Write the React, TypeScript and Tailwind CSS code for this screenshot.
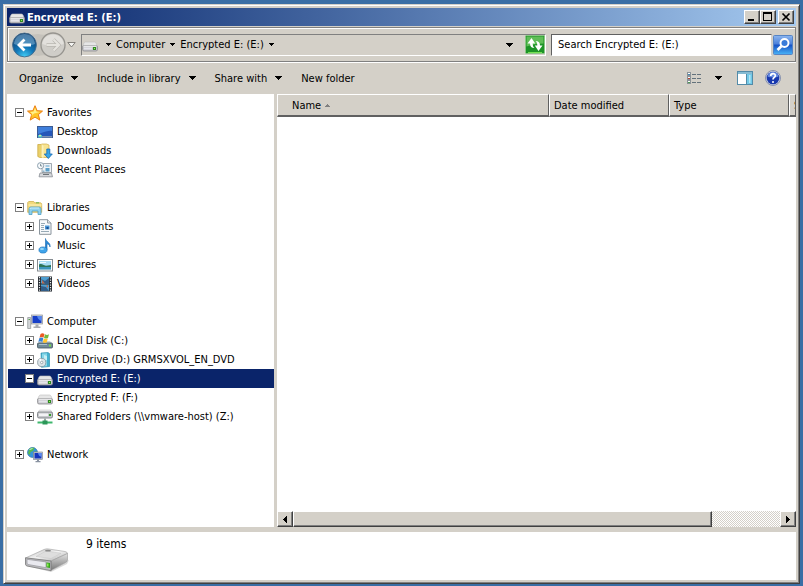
import type { ReactNode } from "react";

const RAISED =
  "border border-t-white border-l-white border-r-[#404040] border-b-[#404040] bg-[#d4d0c8] shadow-[inset_-1px_-1px_0_#808080]";

function Caret({ small = false }: { small?: boolean }) {
  return small ? (
    <svg width="5" height="3" viewBox="0 0 5 3" shapeRendering="crispEdges" aria-hidden="true">
      <path d="M0 0h5v1h-1v1h-1v1h-1v-1h-1v-1h-1z" fill="#000" />
    </svg>
  ) : (
    <svg width="7" height="4" viewBox="0 0 7 4" shapeRendering="crispEdges" aria-hidden="true">
      <path d="M0 0h7v1h-1v1h-1v1h-1v1h-1v-1h-1v-1h-1v-1h-1z" fill="#000" />
    </svg>
  );
}

function Icon({ children }: { children: ReactNode }) {
  return (
    <svg className="shrink-0" width="16" height="16" viewBox="0 0 16 16" aria-hidden="true">
      {children}
    </svg>
  );
}

function DriveIcon() {
  return (
    <Icon>
      <path d="M3.500 5h9q1 0 1.500 1l1.500 3.500H.5L2 6q.5-1 1.500-1z" fill="#e6e6e6" stroke="#bdbdbd" strokeWidth=".6" />
      <rect x=".5" y="8.500" width="15" height="5.500" rx="1.600" fill="#c6c6ca" stroke="#8e8e92" strokeWidth=".8" />
      <path d="M1.500 9.200h13" stroke="#fafafa" strokeWidth=".9" />
      <path d="M2 10.500h8v2H2z" fill="#e4e4ea" />
      <rect x="11" y="10" width="3" height="3" fill="#2f8a22" />
      <path d="M12 11h1v1h-1z" fill="#9aee62" />
    </Icon>
  );
}

function StarIcon() {
  return (
    <Icon>
      <path
        d="M8 .7l2.100 5 5.400.4-4.100 3.500 1.400 5.500L8 12.100l-4.800 3 1.400-5.500L.5 6.100l5.400-.4z"
        fill="#ffc526"
        stroke="#ec7d10"
        strokeWidth="1"
        strokeLinejoin="round"
      />
      <path d="M8 2.800l1.300 3.700 3.700.4-6 1.600L4 11.500l1.400-2.500L3 7l3.700-.4z" fill="#fff08a" />
    </Icon>
  );
}

function DesktopIcon() {
  return (
    <Icon>
      <rect x=".5" y="2.500" width="15" height="11" fill="#2456b8" stroke="#3d5c92" />
      <path d="M1 3h14v4C10 6 6 9 1 10z" fill="#3f7fdc" />
      <path d="M1 12h14v1.500H1z" fill="#7d93b5" />
      <path d="M1 11h4v2.500H1z" fill="#4bbdc9" />
      <circle cx="3" cy="11.500" r="1" fill="#d8f0a0" />
    </Icon>
  );
}

function DownloadsIcon() {
  return (
    <Icon>
      <path d="M.8 1.500h5v13h-3l-2-1z" fill="#ead06a" stroke="#c9a437" strokeWidth=".7" />
      <path d="M4.500 1h5l2.500 1v12.500H5.500z" fill="#f7e391" stroke="#d0ae46" strokeWidth=".7" />
      <path d="M4.500 1l2 2v12.500l-2-1.500z" fill="#fbf1bb" />
      <path d="M9.800 6h3v5h2.500l-4 4.500-4-4.500h2.500z" fill="#38a5e6" stroke="#1468b4" strokeWidth=".8" />
    </Icon>
  );
}

function RecentIcon() {
  return (
    <Icon>
      <path d="M5 1.500h9.500v9H5z" fill="#eef2f6" stroke="#8a949d" strokeWidth=".8" />
      <path d="M8.500 3.500h4v1h-4zM8.500 6h4v3.500h-4z" fill="#5ba0c9" />
      <path d="M5.500 8.500h2v1.500h-2z" fill="#92b6cb" />
      <path d="M3 11h11.500l1 3.800H2z" fill="#d7d9dc" stroke="#888d93" strokeWidth=".8" />
      <path d="M6 12.500h6" stroke="#6c7378" />
      <circle cx="3.600" cy="3.700" r="3.100" fill="#f8fbfd" stroke="#8fa2af" />
      <path d="M3.600 1.800v2.200h1.600" fill="none" stroke="#46606f" strokeWidth=".7" />
    </Icon>
  );
}

function LibrariesIcon() {
  return (
    <Icon>
      <path d="M.7 2.500l1-1h5l1 1.300h6l1 1v8.500H.7z" fill="#f2da7c" stroke="#cba945" strokeWidth=".7" />
      <path d="M1.500 5h13" stroke="#fff4bd" />
      <path d="M9 2.800h3" stroke="#79b655" strokeWidth="1.200" />
      <path d="M2 14.500V9c0-1.200.8-2 2-2h8c1.200 0 2 .8 2 2v5.500h-3V11H5v3.500z" fill="#8ed1ec" stroke="#4fa0c8" strokeWidth=".8" />
      <path d="M3 9c0-.8.4-1 1-1h8" fill="none" stroke="#dcf5fd" strokeWidth=".8" />
    </Icon>
  );
}

function DocumentsIcon() {
  return (
    <Icon>
      <path d="M2.500.7h8L14 4v11.300H2.500z" fill="#f7f9fb" stroke="#7e8992" strokeWidth=".9" />
      <path d="M10.500.7V4H14" fill="#dce3e8" stroke="#7e8992" strokeWidth=".8" />
      <path d="M4 4.500h4M4 6.500h3M4 8.500h3M4 10.500h3M4 12.500h8" stroke="#8ba0ae" strokeWidth=".9" />
      <path d="M8 6.500h4.500v4H8z" fill="#4a96d5" />
      <path d="M9.500 8h2v2h-2z" fill="#184d91" />
    </Icon>
  );
}

function MusicIcon() {
  return (
    <Icon>
      <path d="M8.500.5c.5 3.500 5.500 4 4.500 8.500-.3-2-1.500-3-3-3.200v6.400H8.500z" fill="#2789d8" stroke="#1767ad" strokeWidth=".6" />
      <ellipse cx="6" cy="12" rx="4.100" ry="3.100" fill="#3fa4ea" stroke="#1e72b8" strokeWidth=".6" />
      <ellipse cx="5" cy="11" rx="2" ry="1" fill="#9adcfb" />
    </Icon>
  );
}

function PicturesIcon() {
  return (
    <Icon>
      <rect x=".5" y="2.500" width="15" height="11.500" fill="#fff" stroke="#858b90" />
      <path d="M2 4h12v8.500H2z" fill="#a9dcf4" />
      <path d="M2 7.500c3-1.500 4 1 7 1.200l5-.7v2.500H2z" fill="#2d7459" />
      <path d="M2 10h12v2.500H2z" fill="#3b95bb" />
      <path d="M3 5.500h6" stroke="#effaff" />
    </Icon>
  );
}

function VideosIcon() {
  return (
    <Icon>
      <rect x="1" y=".5" width="14" height="15" fill="#252b31" />
      <path d="M4 1h8v6.500H4zM4 8.500h8V15H4z" fill="#4e9ed0" />
      <path d="M4 3l4 2 4-3v5.500H7zM4 10l5 1 3 4H4z" fill="#315d88" />
      <path d="M5 4l3 3.500H5zM9 10l2-1v3z" fill="#bf6c50" />
      <path d="M2.500 1v14M13.500 1v14" stroke="#e8edf0" strokeWidth="1.200" strokeDasharray="1.200 1.300" />
    </Icon>
  );
}

function ComputerIcon() {
  return (
    <Icon>
      <path d="M.7 3.500h3v11h-3z" fill="#d3d6d8" stroke="#8c9093" strokeWidth=".7" />
      <path d="M1.500 5.500h1.500" stroke="#55a54b" />
      <rect x="4.500" y="1" width="11" height="9" fill="#d1d4d9" stroke="#8d929a" strokeWidth=".7" />
      <path d="M5.500 2h9v7h-9z" fill="#173fc8" />
      <path d="M10 2h4.500v5C12 6 11 5 10 2z" fill="#5688f0" />
      <path d="M8.500 10.500h3v2h2V14H6.500v-1.500h2z" fill="#a8abb1" />
    </Icon>
  );
}

function LocalDiskIcon() {
  return (
    <Icon>
      <path d="M3 8h10l2.500 3H.5z" fill="#c9d5dc" />
      <rect x=".5" y="10" width="15" height="5" rx="1" fill="#718b98" stroke="#42545d" strokeWidth=".8" />
      <path d="M2 11.500h8" stroke="#abc1cc" />
      <path d="M12 11.500h2v2h-2z" fill="#75dc48" />
      <path d="M3.500 1c1.500-1 2.500-.8 4 0L6.500 4.700c-1.500-.8-2.500-.8-4 0z" fill="#ec5a22" />
      <path d="M8 1.300c1.500.8 2.500.8 4 0L11 5c-1.500.8-2.500.8-4 0z" fill="#74b83b" />
      <path d="M2.300 5.200c1.500-.8 2.500-.8 4 0l-1 3.700c-1.500-.8-2.500-.8-4 0z" fill="#3582d4" />
      <path d="M6.800 5.500c1.500.8 2.500.8 4 0l-1 3.700c-1.500.8-2.500.8-4 0z" fill="#ffc52e" />
    </Icon>
  );
}

function DvdIcon() {
  return (
    <Icon>
      <path d="M4 1l7-.5 1.500 1v13l-8 .8z" fill="#45b2cf" stroke="#2588a8" strokeWidth=".6" />
      <path d="M5 1.500l5-.3v13l-5 .6z" fill="#87d7e8" />
      <path d="M7 3l3 1v4H7z" fill="#c8f0f5" />
      <circle cx="4.700" cy="10.500" r="4.100" fill="#dce3e7" stroke="#87959d" strokeWidth=".8" />
      <path d="M4.700 10.500L2 7.500l2-1z" fill="#fff" />
      <circle cx="4.700" cy="10.500" r="1.200" fill="#fff" stroke="#829098" strokeWidth=".7" />
    </Icon>
  );
}

function SharedIcon() {
  return (
    <Icon>
      <path d="M2.500 1h11l2 3H.5z" fill="#eeeeef" stroke="#b8b8ba" strokeWidth=".5" />
      <rect x=".5" y="3" width="15" height="6" rx="1.500" fill="#c6c8cb" stroke="#7c7f83" strokeWidth=".9" />
      <path d="M2 4.500h9v2.500H2z" fill="#f3f3f5" />
      <path d="M12 5h2v2h-2z" fill="#35a02a" />
      <path d="M7 9.500h2v3H7z" fill="#9aa6a2" />
      <path d="M.5 12.500h15v2H.5z" fill="#3eb76c" />
      <path d="M5.500 11.500h5v4h-5z" fill="#2b9658" />
    </Icon>
  );
}

function NetworkIcon() {
  return (
    <Icon>
      <circle cx="5.500" cy="5.500" r="5" fill="#3795dc" stroke="#27699c" strokeWidth=".6" />
      <path d="M2 2.500C4 .5 6 .8 7.500 1L6 4 3.500 5 3 8 1 6.500zM6 6l3-2 1.500 2L7 9.500z" fill="#55bc4e" />
      <path d="M2.500 2.500l3-1" stroke="#c9f2cb" />
      <rect x="6.500" y="5" width="9" height="7.500" fill="#c9ced7" stroke="#757d8a" strokeWidth=".6" />
      <path d="M7.500 6h7v5.500h-7z" fill="#1535bd" />
      <path d="M11 6h3.500v4C12 9 11.500 8 11 6z" fill="#5a8af0" />
      <path d="M10 12.500h2V14h1.500v1.300h-5V14H10z" fill="#8992a1" />
    </Icon>
  );
}

type Item = {
  label: string;
  icon: ReactNode;
  state?: "open" | "closed";
  level?: number;
  selected?: boolean;
};

const GROUPS: Item[][] = [
  [
    { label: "Favorites", icon: <StarIcon />, state: "open" },
    { label: "Desktop", icon: <DesktopIcon />, level: 1 },
    { label: "Downloads", icon: <DownloadsIcon />, level: 1 },
    { label: "Recent Places", icon: <RecentIcon />, level: 1 },
  ],
  [
    { label: "Libraries", icon: <LibrariesIcon />, state: "open" },
    { label: "Documents", icon: <DocumentsIcon />, state: "closed", level: 1 },
    { label: "Music", icon: <MusicIcon />, state: "closed", level: 1 },
    { label: "Pictures", icon: <PicturesIcon />, state: "closed", level: 1 },
    { label: "Videos", icon: <VideosIcon />, state: "closed", level: 1 },
  ],
  [
    { label: "Computer", icon: <ComputerIcon />, state: "open" },
    { label: "Local Disk (C:)", icon: <LocalDiskIcon />, state: "closed", level: 1 },
    { label: "DVD Drive (D:) GRMSXVOL_EN_DVD", icon: <DvdIcon />, state: "closed", level: 1 },
    { label: "Encrypted E: (E:)", icon: <DriveIcon />, state: "open", level: 1, selected: true },
    { label: "Encrypted F: (F:)", icon: <DriveIcon />, level: 1 },
    { label: "Shared Folders (\\\\vmware-host) (Z:)", icon: <SharedIcon />, state: "closed", level: 1 },
  ],
  [{ label: "Network", icon: <NetworkIcon />, state: "closed" }],
];

function Expander({ state, label }: { state?: "open" | "closed"; label: string }) {
  if (!state) return <span className="w-[9px] shrink-0" />;
  return (
    <button
      type="button"
      className="size-[9px] shrink-0"
      aria-label={`${state === "open" ? "Collapse" : "Expand"} ${label}`}
    >
      <svg width="9" height="9" viewBox="0 0 9 9" shapeRendering="crispEdges" aria-hidden="true">
        <path d="M.5.5h8v8h-8z" fill="#fff" stroke="#808080" />
        <path d={state === "open" ? "M2 4h5v1H2z" : "M2 4h5v1H2zM4 2h1v5H4z"} fill="#000" />
      </svg>
    </button>
  );
}

function TreeRow({ item }: { item: Item }) {
  return (
    <li
      className={`ml-px flex h-[19px] items-center whitespace-nowrap ${item.level ? "pl-[17px]" : "pl-[7px]"} ${
        item.selected ? "bg-[#0a246a] text-white" : ""
      }`}
    >
      <Expander state={item.state} label={item.label} />
      <span className="ml-[3px] flex items-center gap-1">
        {item.icon}
        {item.label}
      </span>
    </li>
  );
}

function TitleBar() {
  return (
    <header className="flex h-[18px] items-center bg-linear-to-r from-[#0a246a] to-[#a6caf0] px-0.5 text-white">
      <DriveIcon />
      <h1 className="ml-0.5 flex-1 font-bold">Encrypted E: (E:)</h1>
      <button type="button" aria-label="Minimize" className={`h-[14px] w-4 ${RAISED}`}>
        <svg width="14" height="12" viewBox="0 0 14 12" shapeRendering="crispEdges">
          <path d="M3 8h6v2H3z" />
        </svg>
      </button>
      <button type="button" aria-label="Maximize" className={`h-[14px] w-4 ${RAISED}`}>
        <svg width="14" height="12" viewBox="0 0 14 12" shapeRendering="crispEdges">
          <path d="M2 1h9v9H2zM3 3v6h7V3z" fillRule="evenodd" />
        </svg>
      </button>
      <button type="button" aria-label="Close" className={`ml-0.5 h-[14px] w-4 ${RAISED}`}>
        <svg width="14" height="12" viewBox="0 0 14 12">
          <path d="M3.500 2.500l7 7M10.500 2.500l-7 7" stroke="#000" strokeWidth="1.700" />
        </svg>
      </button>
    </header>
  );
}

function HistoryButtons() {
  return (
    <div className="flex items-center">
      <button type="button" aria-label="Back">
        <svg width="27" height="28" viewBox="0 0 27 28">
          <defs>
            <radialGradient id="back" cx=".5" cy="1" r=".9">
              <stop offset="0" stopColor="#43d0f8" />
              <stop offset=".45" stopColor="#1277b8" />
              <stop offset="1" stopColor="#0b3f73" />
            </radialGradient>
          </defs>
          <path d="M13 2c6 1 9 2 14 1v22c-5-1-8 0-14 1z" fill="#c5c2bb" />
          <circle cx="13.500" cy="14" r="12.500" fill="#c5ced4" />
          <circle cx="13.500" cy="14" r="11.900" fill="url(#back)" stroke="#4a6a84" strokeWidth=".9" />
          <path d="M3 13C3.500 6.500 7.500 3 13.500 3s10 3.500 10.500 10c-5 2-16 2-21 0z" fill="#8fbfdf" opacity=".5" />
          <path d="M20 14H8.500M13.500 8.500L8 14l5.500 5.500" fill="none" stroke="#fff" strokeWidth="2.800" />
        </svg>
      </button>
      <button type="button" aria-label="Forward">
        <svg width="29" height="28" viewBox="0 0 29 28">
          <path d="M0 3c4 1 7 1 11 0v22c-4-1-7-1-11 0z" fill="#c5c2bb" />
          <circle cx="15" cy="14" r="12" fill="#cfcdc8" stroke="#96948f" strokeWidth="1.300" />
          <path d="M4.300 13C5 7 9.500 3.500 15 3.500S25 7 25.700 13c-5 2-16 2-21.400 0z" fill="#e2e0dc" />
          <path d="M8.500 14h12M15.500 8.500l5.500 5.500-5.500 5.500" fill="none" stroke="#b9b6b0" strokeWidth="3.400" />
          <path d="M8.500 14h12M15.500 8.500l5.500 5.500-5.500 5.500" fill="none" stroke="#e5e3de" strokeWidth="2.200" />
        </svg>
      </button>
      <button type="button" aria-label="Recent locations">
        <svg width="9" height="7" viewBox="0 0 9 7">
          <path d="M.8 1.500h7.400L4.500 6z" fill="#f5f5f3" stroke="#77756f" strokeWidth=".9" />
        </svg>
      </button>
    </div>
  );
}

function NavBar() {
  return (
    <nav className="mt-px flex h-[35px] items-center border border-[#808080] pr-0.5 pl-[3px] shadow-[inset_1px_1px_0_#fff,0_1px_0_#fff]">
      <HistoryButtons />
      <div className="ml-[5px] flex h-[22px] flex-1 items-center border border-t-[#808080] border-r-white border-b-white border-l-[#808080]">
        <DriveIcon />
        <button type="button" aria-label="All locations" className="ml-2">
          <Caret small />
        </button>
        <button type="button" className="ml-[5px] flex items-center gap-[5px]">
          Computer
          <Caret small />
        </button>
        <button type="button" className="ml-[5px] flex items-center gap-[5px]">
          Encrypted E: (E:)
          <Caret small />
        </button>
        <button type="button" aria-label="Previous locations" className="mr-3 ml-auto">
          <Caret />
        </button>
        <button type="button" aria-label="Refresh">
          <svg width="20" height="19" viewBox="0 0 20 19">
            <rect x=".5" y=".5" width="19" height="18" rx="1" fill="#1d9427" stroke="#8cc586" />
            <path d="M1.500 1.500h17v7c-6 0-11 1-17 3z" fill="#60bd57" />
            <path d="M3 17.500h14" stroke="#74e052" />
            <path d="M6.500 3L2.500 8.500H5c0 3 1.500 4.500 4.500 4.500-1.300-1-1.800-2.500-1.800-4.500h2.500z" fill="#fff" />
            <path d="M13.500 16l4-5.500H15c0-3-1.500-4.500-4.500-4.500 1.300 1 1.800 2.500 1.800 4.500H9.800z" fill="#fff" />
          </svg>
        </button>
      </div>
      <div className="ml-[5px] flex w-[242px] items-center">
        <input
          type="text"
          aria-label="Search Encrypted E: (E:)"
          placeholder="Search Encrypted E: (E:)"
          className="h-[22px] min-w-0 flex-1 border border-t-[#606060] border-r-[#d4d0c8] border-b-white border-l-[#606060] bg-white px-1.5 placeholder:text-black"
        />
        <button type="button" aria-label="Search" className="ml-px">
          <svg width="20" height="20" viewBox="0 0 20 20">
            <defs>
              <linearGradient id="find" x1="0" y1="0" x2="0" y2="1">
                <stop offset="0" stopColor="#8cb6ef" />
                <stop offset=".45" stopColor="#4b80da" />
                <stop offset=".5" stopColor="#1751c3" />
                <stop offset="1" stopColor="#49b4f8" />
              </linearGradient>
            </defs>
            <rect x=".5" y=".5" width="19" height="19" rx="1" fill="url(#find)" stroke="#5684c4" />
            <path d="M8.500 11l-4 4" stroke="#fff" strokeWidth="2.600" />
            <circle cx="11.500" cy="8" r="4" fill="#397bd9" stroke="#fff" strokeWidth="1.900" />
          </svg>
        </button>
      </div>
    </nav>
  );
}

function Toolbar() {
  return (
    <div className="flex h-8 items-center gap-[19px] pr-[15px] pl-3">
      <button type="button" className="flex items-center gap-2">
        Organize
        <Caret />
      </button>
      <button type="button" className="flex items-center gap-2">
        Include in library
        <Caret />
      </button>
      <button type="button" className="flex items-center gap-2">
        Share with
        <Caret />
      </button>
      <button type="button">New folder</button>
      <div className="ml-auto flex items-center">
        <button type="button" aria-label="Change your view" className="flex items-center gap-[13px]">
          <svg width="16" height="13" viewBox="0 0 16 13" shapeRendering="crispEdges">
            <path d="M1.500.500h3v3h-3zM1.500 4.500h3v3h-3zM1.500 8.500h3v3h-3z" fill="#fff" stroke="#8b9398" />
            <path d="M2 2h2v1H2z" fill="#4386b5" />
            <path d="M2 6h2v1H2z" fill="#b84738" />
            <path d="M2 10h2v1H2z" fill="#4c9a50" />
            <path d="M6 2h4v1H6zM11 2h4v1h-4zM6 6h4v1H6zM11 6h4v1h-4zM6 10h4v1H6zM11 10h4v1h-4z" fill="#64727c" />
          </svg>
          <Caret />
        </button>
        <button type="button" aria-label="Show the preview pane" className="ml-[15px]">
          <svg width="16" height="14" viewBox="0 0 16 14">
            <rect x=".5" y=".5" width="15" height="13" fill="#fff" stroke="#538ba8" />
            <path d="M1 1h14v2H1z" fill="#86bbd2" />
            <path d="M10 3h5v10h-5z" fill="#72cae8" />
            <path d="M12 4h1.500v8H12z" fill="#b3e6f5" />
            <path d="M9.500 3v10" stroke="#538ba8" />
          </svg>
        </button>
        <button type="button" aria-label="Get help" className="ml-3">
          <svg width="16" height="16" viewBox="0 0 16 16">
            <circle cx="8" cy="8" r="7.500" fill="#c8cddd" stroke="#7582a5" strokeWidth=".8" />
            <circle cx="8" cy="8" r="6.300" fill="#1838ae" />
            <path d="M2.500 6.500a5.600 5.600 0 0 1 11 0c-3 1.200-8 1.200-11 0z" fill="#668be0" />
            <path d="M5.700 6c0-3.200 4.800-3 4.600-.3C10.200 7.400 8 7.500 8 9.500" fill="none" stroke="#fff" strokeWidth="1.700" />
            <circle cx="8" cy="12" r="1" fill="#fff" />
          </svg>
        </button>
      </div>
    </div>
  );
}

function FileList() {
  const th =
    "h-[23px] overflow-hidden border-t border-r border-b-2 border-l border-t-white border-r-[#606060] border-b-[#606060] border-l-white p-0 pl-1 text-left font-normal whitespace-nowrap";
  return (
    <main className="flex min-w-0 flex-1 flex-col bg-white">
      <table className="w-full table-fixed border-separate border-spacing-0 bg-[#d4d0c8]">
        <thead>
          <tr>
            <th className={`w-[272px] ${th}`}>
              <span className="flex items-center gap-1 pl-2.5">
                Name
                <svg width="5" height="3" viewBox="0 0 5 3" shapeRendering="crispEdges" aria-hidden="true">
                  <path d="M2 0h1v1h1v1h1v1H0V2h1V1h1z" fill="#808080" />
                </svg>
              </span>
            </th>
            <th className={`w-[120px] ${th}`}>Date modified</th>
            <th className={`w-[120px] ${th}`}>Type</th>
            <th className={th}>Size</th>
          </tr>
        </thead>
      </table>
      <div className="mt-auto flex h-4">
        <button type="button" aria-label="Scroll left" className={`flex w-4 items-center justify-center ${RAISED}`}>
          <svg width="4" height="7" viewBox="0 0 4 7" shapeRendering="crispEdges">
            <path d="M3 0h1v7H3V6H2V5H1V4H0V3h1V2h1V1h1z" />
          </svg>
        </button>
        <div className="flex-1 bg-[repeating-conic-gradient(#ffffff_0_25%,#d4d0c8_0_50%)] bg-[length:2px_2px]">
          <div className={`h-full w-[86%] ${RAISED}`} />
        </div>
        <button type="button" aria-label="Scroll right" className={`flex w-4 items-center justify-center ${RAISED}`}>
          <svg width="4" height="7" viewBox="0 0 4 7" shapeRendering="crispEdges">
            <path d="M0 0h1v1h1v1h1v1h1v1H3v1H2v1H1v1H0z" />
          </svg>
        </button>
      </div>
    </main>
  );
}

function LargeDrive() {
  return (
    <svg width="46" height="26" viewBox="0 0 46 26" aria-hidden="true">
      <defs>
        <linearGradient id="lid" x1="0" y1="0" x2="1" y2="1">
          <stop offset="0" stopColor="#b9b9b9" />
          <stop offset=".5" stopColor="#f3f3f3" />
          <stop offset="1" stopColor="#a9a9a9" />
        </linearGradient>
        <linearGradient id="side" x1="0" y1="0" x2="0" y2="1">
          <stop offset="0" stopColor="#e2e2e2" />
          <stop offset="1" stopColor="#777" />
        </linearGradient>
      </defs>
      <path d="M3 19l24 5 18-11-2 4-16 8z" fill="#d9d9d9" />
      <path d="M1.500 11L20 2.500q2-.8 4-.6L41 4.500q2.500.5 2.500 2L27 14z" fill="url(#lid)" stroke="#aaa" strokeWidth=".7" />
      <path d="M12 9.500L22 4l15 2.300L27 11.500z" fill="#dedede" stroke="#c4c4c4" strokeWidth=".5" />
      <path d="M27 14l16.500-7.500v6.500q0 1.500-2 2.500L27 23.500z" fill="url(#side)" stroke="#999" strokeWidth=".6" />
      <path d="M1.500 10.800L27 14v9.700L3 19q-1.500-.4-1.500-2z" fill="#bcbcbf" stroke="#777" strokeWidth=".8" />
      <path d="M3 12.300l19 2.600v5.800L4 17.500q-1-.3-1-1.500z" fill="#e9e9ef" stroke="#96969c" strokeWidth=".7" />
      <path d="M22.500 15.500l3.500.4v5l-3.500-.6z" fill="#35a51d" />
      <path d="M23 16.500h1.500v3H23z" fill="#8bee50" />
      <ellipse cx="24" cy="3.700" rx="3" ry=".9" fill="#8b8b8b" />
    </svg>
  );
}

export default function App() {
  return (
    <div className="flex min-h-screen flex-col bg-[#3a6ea5] px-[3px] pt-1 pb-0.5 font-['DejaVu_Sans_Condensed','DejaVu_Sans',sans-serif] text-[11px] leading-[15px] text-black">
      <div className="flex flex-1 flex-col border border-t-[#d4d0c8] border-r-[#404040] border-b-[#404040] border-l-[#d4d0c8] bg-[#d4d0c8] p-[3px] shadow-[inset_1px_1px_0_#fff,inset_-1px_-1px_0_#808080]">
        <TitleBar />
        <NavBar />
        <Toolbar />
        <div className="flex flex-1 gap-[3px]">
          <aside className="w-[267px] shrink-0 bg-white pt-[9px]">
            <div className="flex flex-col gap-[19px]">
              {GROUPS.map((group) => (
                <ul key={group[0].label}>
                  {group.map((item) => (
                    <TreeRow key={item.label} item={item} />
                  ))}
                </ul>
              ))}
            </div>
          </aside>
          <FileList />
        </div>
        <footer className="mt-[5px] flex h-12 bg-white pl-[17px]">
          <div className="pt-[15px]">
            <LargeDrive />
          </div>
          <p className="pt-1 pl-4 text-xs">9 items</p>
        </footer>
      </div>
    </div>
  );
}
